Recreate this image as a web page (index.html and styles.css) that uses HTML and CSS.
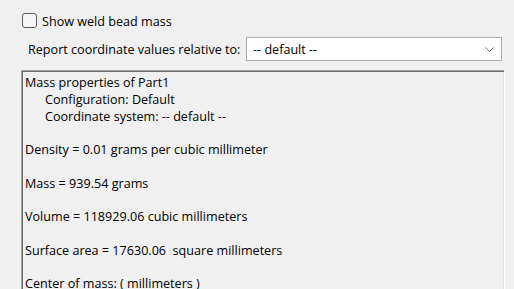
FILE: index.html
```html
<!DOCTYPE html>
<html>
<head>
<meta charset="utf-8">
<link rel="stylesheet" href="styles.css">
</head>
<body>
<div class="panel">
  <label class="check-row">
    <span class="box"></span>
    <span class="check-label">Show weld bead mass</span>
  </label>
  <div class="coord-row">
    <span class="coord-label">Report coordinate values relative to:</span>
    <div class="select">
      <span class="select-value">-- default --</span>
      <svg class="chevron" width="9" height="5" viewBox="0 0 9 5"><path d="M0.5 0.5 L4.5 4.5 L8.5 0.5" fill="none" stroke="#7a7a7a" stroke-width="1"/></svg>
    </div>
  </div>
  <div class="results">
    <div class="line">Mass properties of Part1</div>
    <div class="line indent">Configuration: Default</div>
    <div class="line indent">Coordinate system: -- default --</div>
    <div class="line"></div>
    <div class="line">Density = 0.01 grams per cubic millimeter</div>
    <div class="line"></div>
    <div class="line">Mass = 939.54 grams</div>
    <div class="line"></div>
    <div class="line">Volume = 118929.06 cubic millimeters</div>
    <div class="line"></div>
    <div class="line">Surface area = 17630.06&nbsp; square millimeters</div>
    <div class="line"></div>
    <div class="line">Center of mass: ( millimeters )</div>
  </div>
</div>
</body>
</html>
```
FILE: styles.css
```css
html, body {
  margin: 0;
  padding: 0;
}
body {
  width: 514px;
  height: 289px;
  overflow: hidden;
  background: #f0f0f0;
  font-family: "Segoe UI", "Open Sans", "Noto Sans", sans-serif;
  font-size: 12.6px;
  color: #000;
}
.panel {
  padding: 13px 9px 0 21px;
  display: flex;
  flex-direction: column;
}
.check-row {
  display: flex;
  align-items: center;
  gap: 5px;
  height: 15px;
  margin-left: 1px;
}
.box {
  width: 13px;
  height: 13px;
  border: 1px solid #5c5c5c;
  border-radius: 3px;
  background: #f6f6f6;
  flex: none;
}
.check-label {
  line-height: 15px;
  padding-top: 2px;
}
.coord-row {
  display: flex;
  align-items: center;
  margin-top: 9px;
  margin-right: 3px;
  padding-left: 7px;
}
.coord-label {
  white-space: nowrap;
}
.select {
  margin-left: auto;
  width: 256px;
  height: 24px;
  box-sizing: border-box;
  border: 1px solid #adadad;
  background: #fff;
  display: flex;
  align-items: center;
  padding: 0 7px 0 6px;
}
.select-value {
  flex: 1;
}
.chevron {
  display: block;
}
.results {
  margin-top: 9px;
  height: 260px;
  border-top: 1px solid #a0a0a0;
  border-left: 1px solid #a0a0a0;
  border-right: 1px solid #ffffff;
  border-bottom: 1px solid #ffffff;
  box-shadow: inset 1px 1px 0 #696969, inset -1px -1px 0 #e3e3e3;
  padding: 4px 0 0 3px;
  line-height: 16.75px;
}
.line {
  height: 16.75px;
  white-space: pre;
}
.indent {
  padding-left: 20px;
}
```
